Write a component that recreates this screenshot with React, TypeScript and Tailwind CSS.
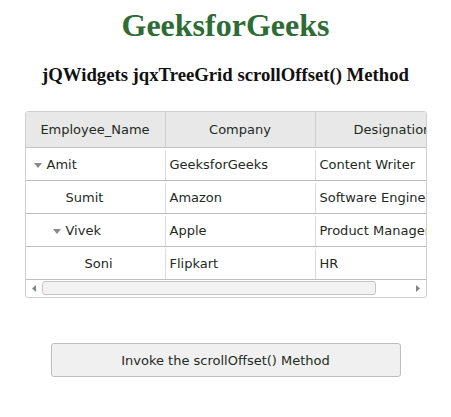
const rows = [
  { name: "Amit", level: 0, arrow: true, company: "GeeksforGeeks", role: "Content Writer" },
  { name: "Sumit", level: 1, arrow: false, company: "Amazon", role: "Software Engineer" },
  { name: "Vivek", level: 1, arrow: true, company: "Apple", role: "Product Manager" },
  { name: "Soni", level: 2, arrow: false, company: "Flipkart", role: "HR" },
];

function Caret() {
  return (
    <svg width="8" height="5" viewBox="0 0 8 5" className="mr-[5px] shrink-0">
      <path d="M0 0h8L4 5z" fill="#8a8a8a" />
    </svg>
  );
}

export default function App() {
  return (
    <div className="flex w-[451px] flex-col items-center bg-white font-['Liberation_Serif',serif]">
      <h1 className="pt-[7px] text-[32px] font-bold leading-[37px] text-[#2f6b35]">GeeksforGeeks</h1>
      <h3 className="mt-[20px] text-[18.72px] font-bold leading-[22px] text-[#111]">
        jQWidgets jqxTreeGrid scrollOffset() Method
      </h3>

      <div className="mt-[25px] h-[187px] w-[402px] overflow-hidden rounded-[3px] border border-[#cfcfcf] font-['DejaVu_Sans',sans-serif] text-[13px] text-[#1e2a1e]">
        <div className="flex h-[36px] border-b border-[#c4c4c4] bg-[#e8e8e8]">
          <div className="flex w-[140px] shrink-0 items-center justify-center border-r border-[#cdcdcd] pt-[1px]">Employee_Name</div>
          <div className="flex w-[150px] shrink-0 items-center justify-center border-r border-[#cdcdcd] pt-[1px]">Company</div>
          <div className="flex w-[154px] shrink-0 items-center justify-center whitespace-nowrap pt-[1px]">Designation</div>
        </div>
        {rows.map((r) => (
          <div key={r.name} className="flex h-[33px] border-b border-[#bdbdbd] pt-[2px] last:border-b-0">
            <div
              className="flex w-[140px] shrink-0 items-center border-r border-[#dadada]"
              style={{ paddingLeft: 8 + r.level * 19 + (r.arrow ? 0 : 13) }}
            >
              {r.arrow && <Caret />}
              {r.name}
            </div>
            <div className="flex w-[150px] shrink-0 items-center border-r border-[#dadada] pl-[4px]">{r.company}</div>
            <div className="flex w-[154px] shrink-0 items-center whitespace-nowrap pl-[4px]">{r.role}</div>
          </div>
        ))}
        <div className="flex h-[16px] items-center">
          <div className="flex w-[16px] items-center justify-center">
            <svg width="4" height="7" viewBox="0 0 4 7">
              <path d="M4 0v7L0 3.5z" fill="#7d8a7d" />
            </svg>
          </div>
          <div className="h-[14px] w-[334px] rounded-[3px] border border-[#c4c4c4] bg-[#f2f2f2]" />
          <div className="flex-1" />
          <div className="flex w-[16px] items-center justify-center">
            <svg width="4" height="7" viewBox="0 0 4 7">
              <path d="M0 0v7L4 3.5z" fill="#7d8a7d" />
            </svg>
          </div>
        </div>
      </div>

      <button className="mt-[45px] h-[34px] w-[350px] rounded-[3px] border border-[#bdbdbd] bg-[#f0f0f0] pt-[1px] font-['DejaVu_Sans',sans-serif] text-[13px] text-[#1e2a1e]">
        Invoke the scrollOffset() Method
      </button>
    </div>
  );
}
